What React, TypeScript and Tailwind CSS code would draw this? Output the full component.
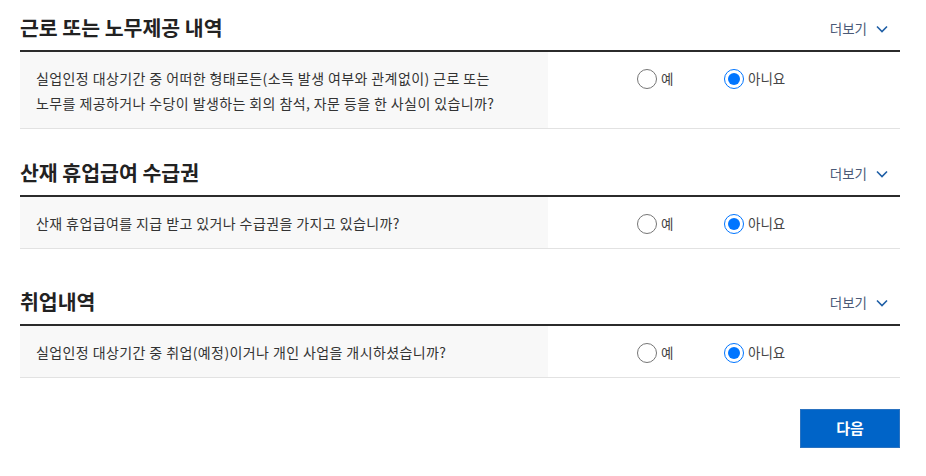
import React from "react";

const FONT = { fontFamily: '"Noto Sans CJK KR", "Noto Sans", sans-serif' };

function Radio({ checked, label, wide }: { checked: boolean; label: string; wide?: boolean }) {
  return (
    <div className={`flex items-center h-[25px] ${wide ? "w-[87px]" : ""}`}>
      {checked ? (
        <span className="w-[20px] h-[20px] rounded-full border-[1.5px] border-[#0075ff] flex items-center justify-center shrink-0">
          <span className="w-[12px] h-[12px] rounded-full bg-[#0075ff]" />
        </span>
      ) : (
        <span className="w-[20px] h-[20px] rounded-full border border-[#767676] shrink-0" />
      )}
      <span className="ml-[4px] text-[13.5px] text-[#444]">{label}</span>
    </div>
  );
}

function Section({
  title,
  lines,
  className,
}: {
  title: string;
  lines: string[];
  className?: string;
}) {
  return (
    <div className={className}>
      <div className="flex items-center justify-between pt-[13px] pb-[8px]">
        <h2 className="text-[20.5px] leading-[29px] font-bold text-[#222]">{title}</h2>
        <div className="flex items-center gap-[9px] pr-[12px] pt-[2px]">
          <span className="text-[13.5px] text-[#4b5a77]">더보기</span>
          <svg width="12" height="8" viewBox="0 0 12 8">
            <polyline points="1,1.5 6,6.5 11,1.5" fill="none" stroke="#1f5fa6" strokeWidth="1.6" />
          </svg>
        </div>
      </div>
      <div className="h-[2px] bg-[#2b2b2b]" />
      <div className="flex border-b border-[#e2e2e2]">
        <div className="w-[528px] bg-[#f8f8f8] pl-[16px] pt-[14px] pb-[12px] text-[14px] tracking-[0.4px] leading-[25px] text-[#333]">
          {lines.map((l, i) => (
            <div key={i}>{l}</div>
          ))}
        </div>
        <div className="flex-1 pl-[89px] pt-[14px] pb-[12px] flex items-start">
          <Radio checked={false} label="예" wide />
          <Radio checked={true} label="아니요" />
        </div>
      </div>
    </div>
  );
}

export default function App() {
  return (
    <div className="w-[926px] h-[476px] bg-white" style={FONT}>
      <div className="ml-[20px] w-[880px] flex flex-col">
        <Section
          title="근로 또는 노무제공 내역"
          lines={[
            "실업인정 대상기간 중 어떠한 형태로든(소득 발생 여부와 관계없이) 근로 또는",
            "노무를 제공하거나 수당이 발생하는 회의 참석, 자문 등을 한 사실이 있습니까?",
          ]}
        />
        <Section
          className="mt-[16px]"
          title="산재 휴업급여 수급권"
          lines={["산재 휴업급여를 지급 받고 있거나 수급권을 가지고 있습니까?"]}
        />
        <Section
          className="mt-[25px]"
          title="취업내역"
          lines={["실업인정 대상기간 중 취업(예정)이거나 개인 사업을 개시하셨습니까?"]}
        />
        <div className="flex justify-end mt-[31px]">
          <button className="w-[100px] h-[39px] bg-[#0064c8] border border-[#2a72c0] text-white text-[15px] font-bold">
            다음
          </button>
        </div>
      </div>
    </div>
  );
}
